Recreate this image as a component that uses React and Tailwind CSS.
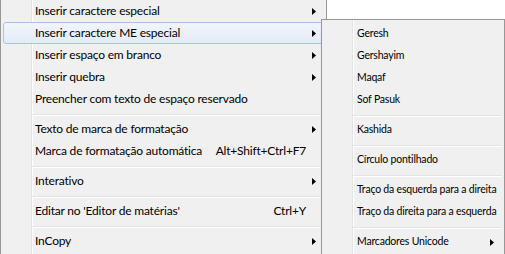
const MAIN = [
  { label: "Inserir caractere especial", sub: true },
  { label: "Inserir caractere ME especial", sub: true, active: true },
  { label: "Inserir espaço em branco", sub: true },
  { label: "Inserir quebra", sub: true },
  { label: "Preencher com texto de espaço reservado" },
  { sep: true },
  { label: "Texto de marca de formatação", sub: true },
  { label: "Marca de formatação automática", shortcut: "Alt+Shift+Ctrl+F7" },
  { sep: true },
  { label: "Interativo", sub: true },
  { sep: true },
  { label: "Editar no 'Editor de matérias'", shortcut: "Ctrl+Y" },
  { sep: true },
  { label: "InCopy", sub: true },
]

const SUB = [
  { label: "Geresh" },
  { label: "Gershayim" },
  { label: "Maqaf" },
  { label: "Sof Pasuk" },
  { sep: true },
  { label: "Kashida" },
  { sep: true },
  { label: "Círculo pontilhado" },
  { sep: true },
  { label: "Traço da esquerda para a direita" },
  { label: "Traço da direita para a esquerda" },
  { sep: true },
  { label: "Marcadores Unicode", sub: true },
]

const Arrow = () => (
  <svg width="4" height="7" viewBox="0 0 4 7" className="block">
    <path d="M0 0 L4 3.5 L0 7 Z" fill="#000" />
  </svg>
)

// gutter line at 31px: light gray + white highlight
const GUTTER =
  "bg-[linear-gradient(to_right,transparent_30px,#e2e3e3_30px,#e2e3e3_31px,#ffffff_31px,#ffffff_32px,transparent_32px)]"

const Separator = () => (
  <div className="h-[8px] pl-[31px] pr-[2px] pt-[4px]">
    <div className="h-px bg-[#e2e3e3]" />
    <div className="h-px bg-white" />
  </div>
)

const MainRow = ({ item }) => (
  <div
    className={`mx-[2px] flex h-[22px] items-center rounded-[3px] border pl-[31px] ${
      item.active
        ? "border-[#a8c3e8] bg-[linear-gradient(#f1f5fb,#e3ebf8)]"
        : "border-transparent"
    }`}
  >
    <span className="flex-1 whitespace-nowrap">{item.label}</span>
    {item.shortcut && <span className="whitespace-nowrap">{item.shortcut}</span>}
    <span className="flex w-[17px] justify-end pr-[7px]">{item.sub && <Arrow />}</span>
  </div>
)

const SubRow = ({ item }) => (
  <div className="mx-[2px] flex h-[22px] items-center border border-transparent pl-[32px]">
    <span className="flex-1 whitespace-nowrap">{item.label}</span>
    <span className="flex w-[16px] justify-end pr-[7px]">{item.sub && <Arrow />}</span>
  </div>
)

export default function App() {
  return (
    <div className="relative h-[254px] w-[505px] overflow-hidden bg-white text-black">
      {/* main context menu */}
      <div
        className={`h-[254px] w-[327px] border-x border-[#979797] bg-[#f0f0f0] ${GUTTER} font-['Lato',sans-serif] text-[12px] tracking-[-0.2px]`}
      >
        {MAIN.map((item, i) => (item.sep ? <Separator key={i} /> : <MainRow key={i} item={item} />))}
      </div>

      {/* submenu */}
      <div
        className={`absolute left-[321px] top-[19px] h-[260px] w-[184px] border border-[#979797] bg-[#f0f0f0] pt-[3px] shadow-[2px_2px_3px_rgba(0,0,0,0.25)] ${GUTTER} font-['Lato',sans-serif] text-[10.5px] tracking-[-0.2px]`}
      >
        {SUB.map((item, i) => (item.sep ? <Separator key={i} /> : <SubRow key={i} item={item} />))}
      </div>
    </div>
  )
}
